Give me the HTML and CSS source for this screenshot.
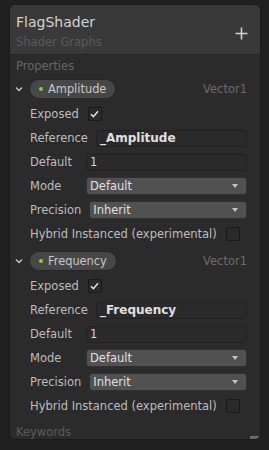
FILE: index.html
```html
<!DOCTYPE html>
<html>
<head>
<meta charset="utf-8">
<link rel="stylesheet" href="styles.css">
</head>
<body>
<div class="panel">
  <div class="header">
    <div class="titles">
      <div class="title">FlagShader</div>
      <div class="subtitle">Shader Graphs</div>
    </div>
    <div class="plus">
      <svg width="13" height="13" viewBox="0 0 13 13"><path d="M6.5 0.5v12M0.5 6.5h12" stroke="#d2d2d2" stroke-width="1.6" fill="none"/></svg>
    </div>
  </div>
  <div class="body">
    <div class="section-label">Properties</div>

    <div class="prop">
      <div class="prop-head">
        <svg class="chev" width="8" height="6" viewBox="0 0 8 6"><path d="M1 1.5l3 3 3-3" stroke="#c8c8c8" stroke-width="1.4" fill="none"/></svg>
        <div class="pill"><span class="dot"></span>Amplitude</div>
        <div class="type">Vector1</div>
      </div>
      <div class="row"><span class="lbl">Exposed</span><span class="check on"><svg width="9" height="8" viewBox="0 0 9 8"><path d="M1 4.2l2.4 2.4L8 1.2" stroke="#e6e6e6" stroke-width="1.4" fill="none"/></svg></span></div>
      <div class="row"><span class="lbl">Reference</span><span class="input bold">_Amplitude</span></div>
      <div class="row"><span class="lbl">Default</span><span class="input">1</span></div>
      <div class="row"><span class="lbl">Mode</span><span class="drop">Default<i class="arrow"></i></span></div>
      <div class="row"><span class="lbl">Precision</span><span class="drop">Inherit<i class="arrow"></i></span></div>
      <div class="row"><span class="lbl">Hybrid Instanced (experimental)</span><span class="check"></span></div>
    </div>

    <div class="prop">
      <div class="prop-head">
        <svg class="chev" width="8" height="6" viewBox="0 0 8 6"><path d="M1 1.5l3 3 3-3" stroke="#c8c8c8" stroke-width="1.4" fill="none"/></svg>
        <div class="pill"><span class="dot"></span>Frequency</div>
        <div class="type">Vector1</div>
      </div>
      <div class="row"><span class="lbl">Exposed</span><span class="check on"><svg width="9" height="8" viewBox="0 0 9 8"><path d="M1 4.2l2.4 2.4L8 1.2" stroke="#e6e6e6" stroke-width="1.4" fill="none"/></svg></span></div>
      <div class="row"><span class="lbl">Reference</span><span class="input bold">_Frequency</span></div>
      <div class="row"><span class="lbl">Default</span><span class="input">1</span></div>
      <div class="row"><span class="lbl">Mode</span><span class="drop">Default<i class="arrow"></i></span></div>
      <div class="row"><span class="lbl">Precision</span><span class="drop">Inherit<i class="arrow"></i></span></div>
      <div class="row"><span class="lbl">Hybrid Instanced (experimental)</span><span class="check"></span></div>
    </div>

    <div class="section-label keywords">Keywords</div>
  </div>
  <div class="resize"></div>
</div>
</body>
</html>
```
FILE: styles.css
```css
html, body {
  margin: 0;
  padding: 0;
  background: #202020;
  width: 269px;
  height: 450px;
  overflow: hidden;
  font-family: "DejaVu Sans", Verdana, sans-serif;
}
.panel {
  position: relative;
  margin: 4px 0 0 9px;
  width: 250px;
  height: 434px;
  border: 1px solid #1a1a1a;
  border-radius: 6px;
  background: #2b2b2b;
  overflow: hidden;
  display: flex;
  flex-direction: column;
}
.header {
  height: 49px;
  background: #393939;
  border-bottom: 1px solid #232323;
  display: flex;
  align-items: flex-start;
  justify-content: space-between;
  padding-left: 6px;
  flex: none;
}
.titles { display: flex; flex-direction: column; }
.title {
  margin-top: 8px;
  font-size: 14px;
  color: #d2d2d2;
  line-height: 18px;
}
.subtitle {
  margin-top: 4px;
  font-size: 11.5px;
  color: #5a5a5a;
  line-height: 14px;
}
.plus {
  margin-top: 22px;
  margin-right: 12px;
  display: flex;
}
.body {
  flex: 1;
  padding: 0 13px 0 6px;
  display: flex;
  flex-direction: column;
}
.section-label {
  height: 24px;
  font-size: 11.5px;
  line-height: 14px;
  padding-top: 4px;
  box-sizing: border-box;
  color: #676767;
}
.keywords {
  padding-top: 2px;
  color: #5a5a5a;
}
.prop { display: flex; flex-direction: column; margin-bottom: 5px; }
.prop-head {
  height: 20px;
  display: flex;
  align-items: center;
  margin-bottom: 3px;
}
.chev { margin-left: -1px; margin-right: 6px; }
.pill {
  height: 18px;
  display: flex;
  align-items: center;
  padding: 0 9px 0 9px;
  background: #474747;
  border: 1px solid #262626;
  border-radius: 10px;
  color: #c8c8c8;
  font-size: 11.4px;
}
.dot {
  width: 4px;
  height: 4px;
  border-radius: 50%;
  background: #7bd13d;
  margin-right: 5px;
}
.type {
  margin-left: auto;
  color: #6c6c6c;
  font-size: 11.5px;
}
.row {
  height: 24px;
  display: flex;
  align-items: center;
  padding-left: 14px;
  font-size: 11.5px;
  color: #bdbdbd;
}
.lbl {
  min-width: 48px;
  margin-right: 8px;
  white-space: nowrap;
}
.check {
  width: 12px;
  height: 12px;
  border: 1px solid #191919;
  background: #2a2a2a;
  border-radius: 2px;
  display: flex;
  align-items: center;
  justify-content: center;
  margin-left: 1px;
}
.input {
  flex: 1;
  height: 15px;
  line-height: 15px;
  background: #2a2a2a;
  border: 1px solid #212121;
  border-radius: 3px;
  padding-left: 3px;
  color: #d2d2d2;
}
.input.bold { font-weight: bold; color: #e0e0e0; font-size: 12px; }
.drop {
  flex: 1;
  height: 16px;
  line-height: 16px;
  background: #515151;
  border: 1px solid #303030;
  border-radius: 3px;
  padding-left: 3px;
  color: #e0e0e0;
  display: flex;
  align-items: center;
}
.arrow {
  margin-left: auto;
  margin-right: 8px;
  width: 0;
  height: 0;
  border-left: 3.5px solid transparent;
  border-right: 3.5px solid transparent;
  border-top: 4px solid #c4c4c4;
}
.resize {
  position: absolute;
  right: 1px;
  bottom: 0;
  width: 9px;
  height: 3px;
  background: #6a6a6a;
}
```
